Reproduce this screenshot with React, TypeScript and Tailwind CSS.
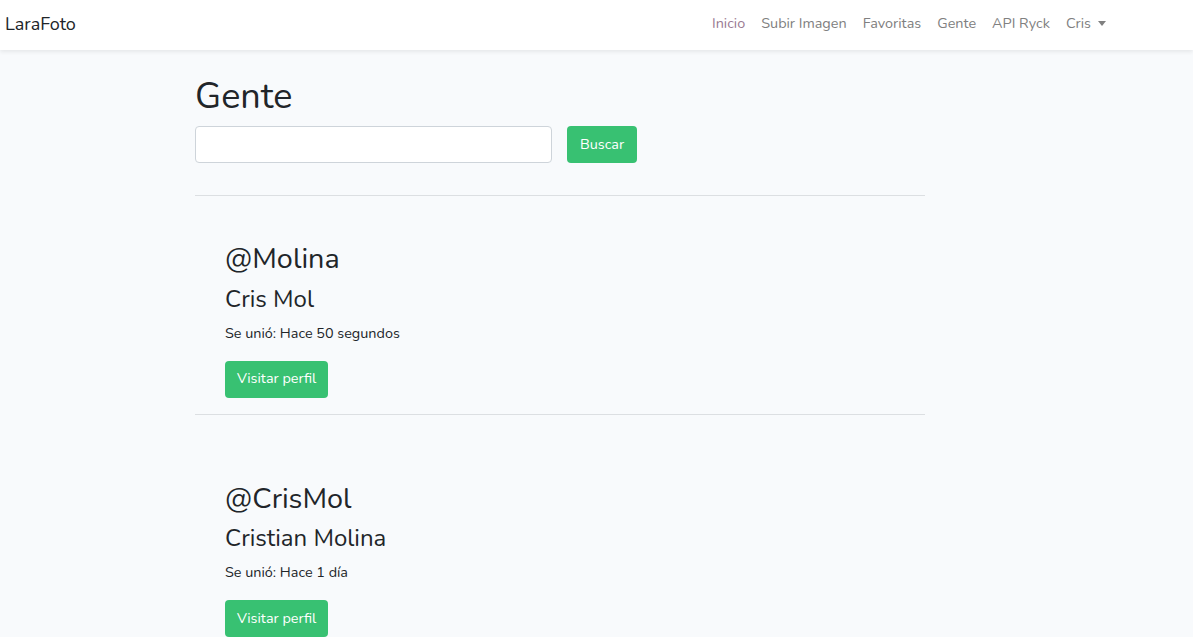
import React from 'react';

const FONT = { fontFamily: 'Nunito, Lato, "Noto Sans", sans-serif' };

const users = [
  { nick: 'Molina', name: 'Cris Mol', joined: 'Hace 50 segundos' },
  { nick: 'CrisMol', name: 'Cristian Molina', joined: 'Hace 1 día' },
];

const links = ['Inicio', 'Subir Imagen', 'Favoritas', 'Gente', 'API Ryck'];

export default function App() {
  return (
    <div className="min-h-screen bg-[#f8fafc] text-[#212529]" style={FONT}>
      <nav className="h-[50px] bg-white shadow-[0_2px_4px_rgba(0,0,0,0.075)] flex items-center justify-between pl-[5px] pr-[87px] pb-[2px]">
        <span className="text-[18px] text-[#212529]">LaraFoto</span>
        <ul className="flex items-center gap-[16px] text-[14.4px] text-[#808080]">
          {links.map((l, i) => (
            <li key={l} className={i === 0 ? 'text-[#9a7a92]' : ''}>{l}</li>
          ))}
          <li className="flex items-center gap-[7px]">
            Cris
            <span className="inline-block w-0 h-0 border-l-[4px] border-r-[4px] border-t-[5px] border-l-transparent border-r-transparent border-t-[#808080]" />
          </li>
        </ul>
      </nav>

      <main className="w-[730px] ml-[195px]">
        <h1 className="text-[36px] leading-[1.2] mt-[25px] mb-[8px] font-normal">Gente</h1>
        <form className="flex items-center gap-[15px]" onSubmit={(e) => e.preventDefault()}>
          <input className="w-[357px] h-[37px] bg-white border border-[#ced4da] rounded-[4px] px-3 outline-none" />
          <button className="h-[37px] px-[13px] rounded-[4px] bg-[#38c172] text-white text-[14.4px]">Buscar</button>
        </form>
        <hr className="mt-[32px] border-t border-[#dcdfe2]" />

        {users.map((u, i) => (
          <div key={u.nick} className={i === 0 ? 'pt-[46px]' : 'pt-[67px]'}>
            <div className="pl-[30px]">
              <h2 className="text-[28.8px] leading-[1.2] mb-[8px]">@{u.nick}</h2>
              <h3 className="text-[24px] leading-[1.2] mb-[8px]">{u.name}</h3>
              <p className="text-[14.4px] leading-[1.6] mb-[16px]">Se unió: {u.joined}</p>
              <button className="h-[37px] px-[12px] rounded-[4px] bg-[#38c172] text-white text-[14.4px]">Visitar perfil</button>
            </div>
            <hr className="mt-[16px] border-t border-[#dcdfe2]" />
          </div>
        ))}
      </main>
    </div>
  );
}
